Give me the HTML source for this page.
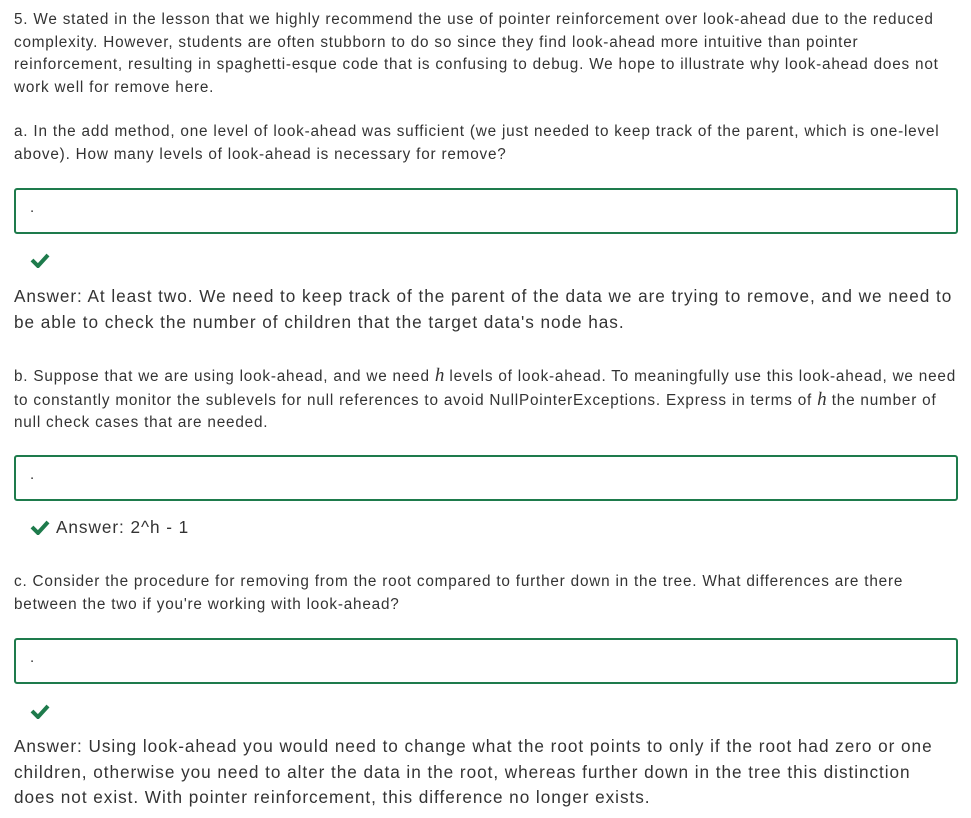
<!DOCTYPE html>
<html><head><meta charset="utf-8"><style>
body{margin:0;width:971px;height:818px;background:#fff;font-family:"Liberation Sans",sans-serif;color:#333;position:relative;overflow:hidden}
.p{position:absolute;left:14px;width:960px;font-size:15.3px;line-height:22.5px;letter-spacing:0.8px;white-space:nowrap}
.a{position:absolute;left:14px;width:960px;font-size:17.2px;line-height:25.5px;letter-spacing:0.95px;white-space:nowrap}
.box{position:absolute;left:14px;width:940px;height:42px;border:2px solid #1e7b4c;border-radius:3px}
.box span{position:absolute;left:14px;top:9px;font-size:15px}
.ck{position:absolute;width:20px;height:16px}
i{font-family:"Liberation Serif",serif;font-size:19px;font-weight:normal;letter-spacing:0}
</style></head><body>
<div class="p" style="top:9px">5. We stated in the lesson that we highly recommend the use of pointer reinforcement over look-ahead due to the reduced<br>complexity. However, students are often stubborn to do so since they find look-ahead more intuitive than pointer<br>reinforcement, resulting in spaghetti-esque code that is confusing to debug. We hope to illustrate why look-ahead does not<br>work well for remove here.</div>
<div class="p" style="top:121px">a. In the add method, one level of look-ahead was sufficient (we just needed to keep track of the parent, which is one-level<br>above). How many levels of look-ahead is necessary for remove?</div>
<div class="box" style="top:188px"><span>.</span></div>
<svg class="ck" style="left:30px;top:252px" viewBox="0 0 20 16"><path d="M2 8 L8 14 L18 3" fill="none" stroke="#1e7b4c" stroke-width="4"/></svg>
<div class="a" style="top:284px">Answer: At least two. We need to keep track of the parent of the data we are trying to remove, and we need to<br>be able to check the number of children that the target data's node has.</div>
<div class="p" style="top:365px">b. Suppose that we are using look-ahead, and we need <i>h</i> levels of look-ahead. To meaningfully use this look-ahead, we need<br>to constantly monitor the sublevels for null references to avoid NullPointerExceptions. Express in terms of <i>h</i> the number of<br>null check cases that are needed.</div>
<div class="box" style="top:455px"><span>.</span></div>
<svg class="ck" style="left:30px;top:519px" viewBox="0 0 20 16"><path d="M2 8 L8 14 L18 3" fill="none" stroke="#1e7b4c" stroke-width="4"/></svg>
<div class="a" style="top:515px;left:56px">Answer: 2^h - 1</div>
<div class="p" style="top:571px">c. Consider the procedure for removing from the root compared to further down in the tree. What differences are there<br>between the two if you're working with look-ahead?</div>
<div class="box" style="top:638px"><span>.</span></div>
<svg class="ck" style="left:30px;top:703px" viewBox="0 0 20 16"><path d="M2 8 L8 14 L18 3" fill="none" stroke="#1e7b4c" stroke-width="4"/></svg>
<div class="a" style="top:734px">Answer: Using look-ahead you would need to change what the root points to only if the root had zero or one<br>children, otherwise you need to alter the data in the root, whereas further down in the tree this distinction<br>does not exist. With pointer reinforcement, this difference no longer exists.</div>
</body></html>
